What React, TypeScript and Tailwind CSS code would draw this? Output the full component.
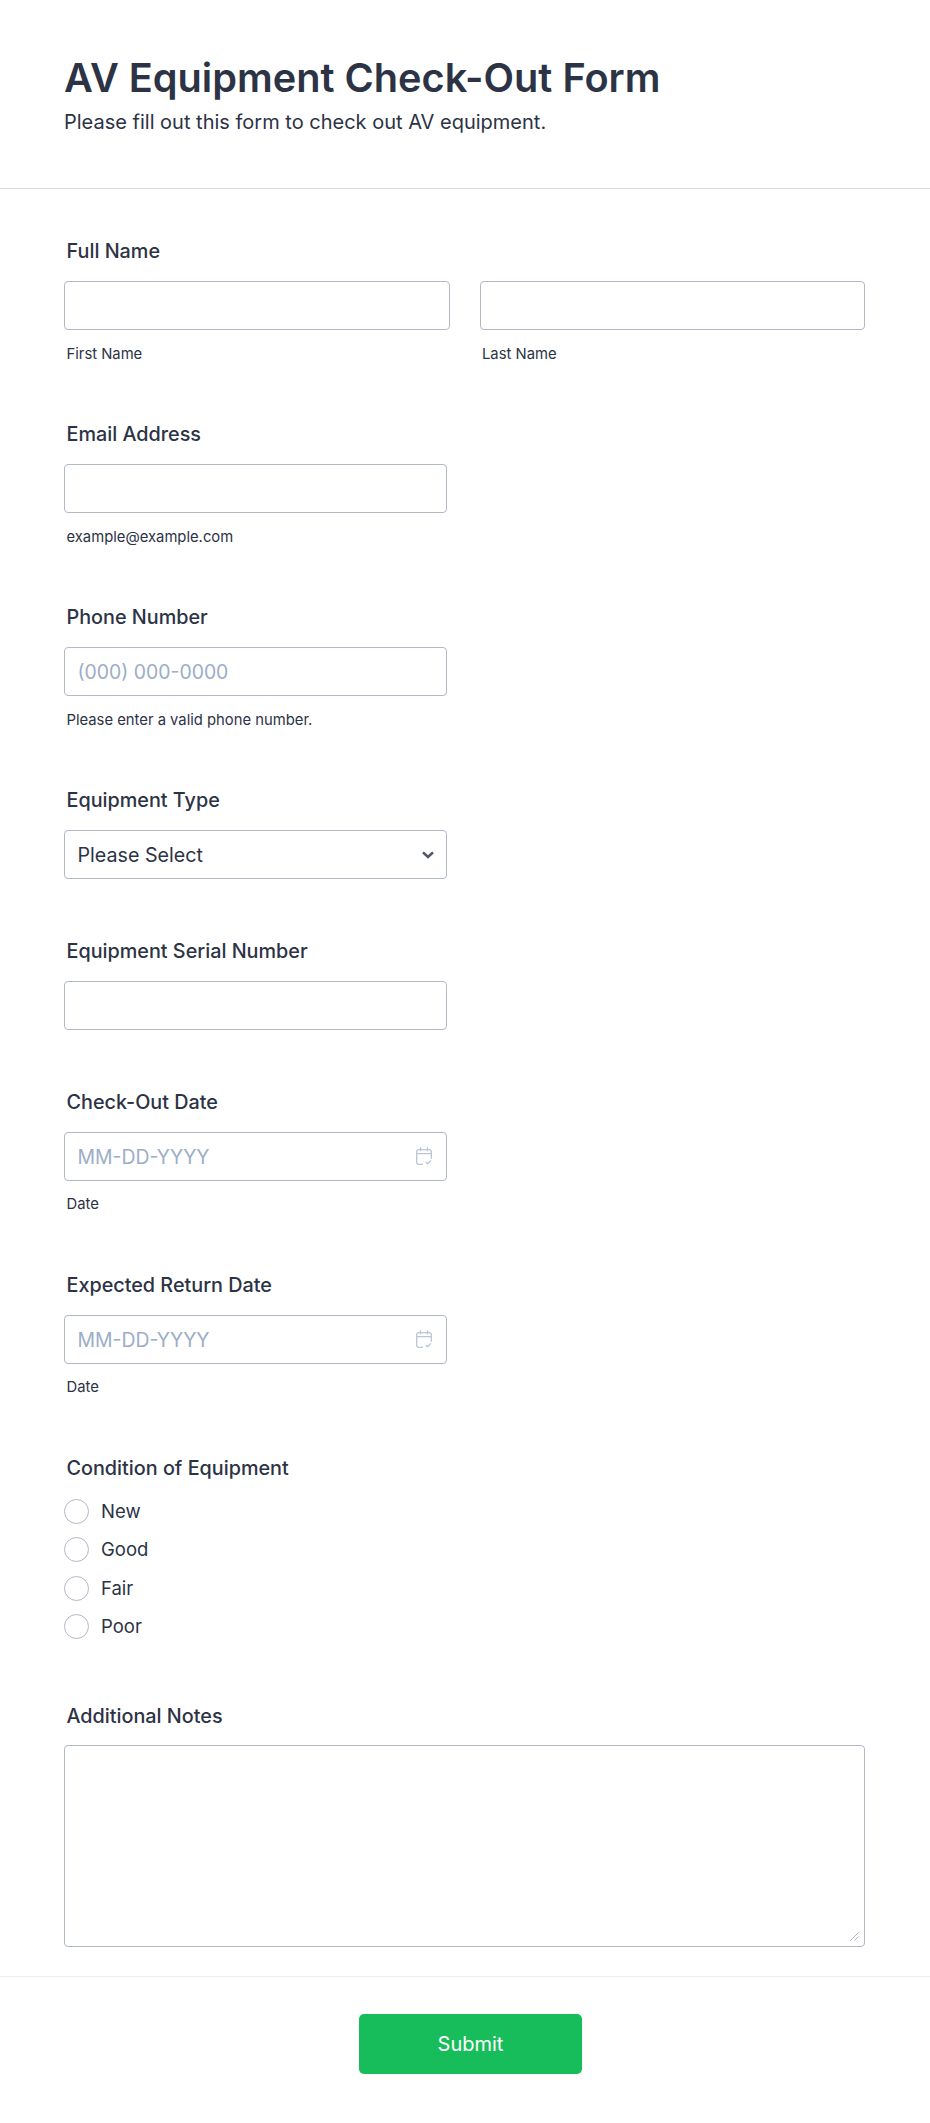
// AV equipment check-out form
import type { ReactNode } from "react";

const inputCls =
  "block h-[49px] w-full rounded-[4px] border border-[#b3b8c6] bg-white px-[12.5px] text-[19.7px] text-[#2c3345] placeholder:text-[19.4px] placeholder:text-[#9cadc7] outline-none";

function Label({ children }: { children: ReactNode }) {
  return <div className="mb-[16px] ml-[2.5px] h-[28px] text-[19.8px] leading-[28px] font-medium text-[#2c3345]">{children}</div>;
}

function Hint({ children }: { children: ReactNode }) {
  return <div className="mt-[12px] ml-[2.5px] h-[24px] text-[14.8px] leading-[24px] text-[#2c3345]">{children}</div>;
}

function CalendarIcon() {
  return (
    <svg viewBox="0 0 16 19" fill="none" stroke="#bcc5d6" strokeWidth="1.3" className="h-[19px] w-[16px]">
      <path d="M7 17.3H2.5a1.8 1.8 0 0 1-1.8-1.8V4.4a1.8 1.8 0 0 1 1.8-1.8h11a1.8 1.8 0 0 1 1.8 1.8v7.4" />
      <path d="M.7 6.7h14.6M4.5.3v4M11.5.3v4" />
      <path d="M9.8 15l1.8 1.8 3.4-3.4" />
    </svg>
  );
}

function DateField({ label }: { label: string }) {
  return (
    <div className="pb-[54px]">
      <Label>{label}</Label>
      <div className="relative w-[383px]">
        <input className={inputCls} placeholder="MM-DD-YYYY" />
        <div className="absolute top-[15px] right-[15px]">
          <CalendarIcon />
        </div>
      </div>
      <div className="mt-[11px] ml-[2.5px] h-[25px] text-[14.8px] leading-[24px]">Date</div>
    </div>
  );
}

export default function App() {
  return (
    <div className="min-h-[2123px] bg-white font-['Inter',sans-serif] text-[#2c3345]">
      <header className="h-[189px] border-b border-[#d8dae9] px-[64px] pt-[50px]">
        <h1 className="text-[39.7px] leading-[56px] font-semibold">AV Equipment Check-Out Form</h1>
        <p className="mt-[1px] text-[20px] leading-[30px]">Please fill out this form to check out AV equipment.</p>
      </header>

      <form className="px-[64px] pt-[48px]">
        <div className="pb-[54px]">
          <Label>Full Name</Label>
          <div className="grid w-[801px] grid-cols-2 gap-[30px]">
            <div>
              <input className={inputCls} />
              <Hint>First Name</Hint>
            </div>
            <div>
              <input className={inputCls} />
              <Hint>Last Name</Hint>
            </div>
          </div>
        </div>

        <div className="pb-[54px]">
          <Label>Email Address</Label>
          <div className="w-[383px]">
            <input className={inputCls} />
          </div>
          <Hint>example@example.com</Hint>
        </div>

        <div className="pb-[54px]">
          <Label>Phone Number</Label>
          <div className="w-[383px]">
            <input className={inputCls} placeholder="(000) 000-0000" />
          </div>
          <Hint>Please enter a valid phone number.</Hint>
        </div>

        <div className="pb-[58px]">
          <Label>Equipment Type</Label>
          <div className="relative w-[383px]">
            <select className={inputCls + " appearance-none pt-[2px]"} defaultValue="">
              <option value="">Please Select</option>
            </select>
            <svg
              viewBox="0 0 12 8"
              fill="none"
              stroke="#505668"
              strokeWidth="2.6"
              className="absolute top-[20.5px] right-[13px] h-[8px] w-[12px]"
            >
              <path d="M1 1.4l5 4.6 5-4.6" />
            </svg>
          </div>
        </div>

        <div className="pb-[58px]">
          <Label>Equipment Serial Number</Label>
          <div className="w-[383px]">
            <input className={inputCls} />
          </div>
        </div>

        <DateField label="Check-Out Date" />
        <DateField label="Expected Return Date" />

        <div className="pb-[63px]">
          <div className="mb-[17px] ml-[2.5px] h-[28px] text-[19.8px] leading-[28px] font-medium">Condition of Equipment</div>
          <div className="flex flex-col gap-[13.3px]">
            {["New", "Good", "Fair", "Poor"].map((o) => (
              <label key={o} className="flex h-[25px] items-center gap-[12px] text-[18.5px] leading-[25px]">
                <input
                  type="radio"
                  name="condition"
                  className="h-[25px] w-[25px] appearance-none rounded-full border border-[#b3b8c6] bg-white"
                />
                {o}
              </label>
            ))}
          </div>
        </div>

        <div>
          <div className="mb-[15px] ml-[2.5px] h-[28px] text-[19.8px] leading-[28px] font-medium">Additional Notes</div>
          <div className="relative w-[801px]">
            <textarea className="block h-[202px] w-full resize-none rounded-[4px] border border-[#b3b8c6] bg-white outline-none" />
            <svg viewBox="0 0 9 9" fill="none" stroke="#b4b8c2" strokeWidth="1" className="absolute right-[6px] bottom-[6px] h-[9px] w-[9px]">
              <path d="M.5 8.5l8-8M4.5 8.5l4-4" />
            </svg>
          </div>
        </div>
      </form>

      <footer className="mt-[29px] flex justify-center border-t border-[#eceef5] pt-[37px]">
        <button
          type="button"
          className="ml-[11px] h-[60px] w-[223px] rounded-[5px] bg-[#18bd5b] pt-[1px] text-[20px] font-normal text-white"
        >
          Submit
        </button>
      </footer>
    </div>
  );
}
